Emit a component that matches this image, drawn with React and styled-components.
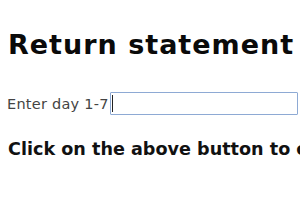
import React from "react";
import styled, { createGlobalStyle } from "styled-components";

const Global = createGlobalStyle`
  html, body { margin: 0; padding: 0; background: #fff; }
  body { font-family: "DejaVu Sans", "Open Sans", sans-serif; overflow: hidden; }
`;

const Page = styled.div`
  width: 300px;
  height: 210px;
  padding: 0 8px;
  box-sizing: border-box;
  white-space: nowrap;
  overflow: hidden;
`;

const Title = styled.h1`
  margin: 0;
  padding-top: 27px;
  font-size: 27px;
  line-height: 36px;
  font-weight: 700;
  letter-spacing: 1px;
  color: #0a0a0a;
`;

const Row = styled.div`
  display: flex;
  align-items: center;
  margin-top: 29px;
  height: 23px;
  margin-left: -1px;
`;

const Label = styled.label`
  font-size: 14.5px;
  letter-spacing: 0.25px;
  color: #444;
`;

const Field = styled.span`
  position: relative;
  flex: none;
  display: block;
  margin-left: 1px;

  &::after {
    content: "";
    position: absolute;
    left: 2px;
    top: 3px;
    width: 1px;
    height: 17px;
    background: #222;
  }
`;

const Input = styled.input`
  display: block;
  width: 188px;
  height: 23px;
  box-sizing: border-box;
  border: 1px solid #8eaad4;
  border-radius: 1px;
  outline: none;
  padding: 0 2px;
  margin: 0;
  font: inherit;
  background: #fff;
`;

const Note = styled.h3`
  margin: 0;
  margin-top: 23px;
  font-size: 17.6px;
  line-height: 22px;
  font-weight: 700;
  color: #111;
`;

export default function App() {
  return (
    <>
      <Global />
      <Page>
        <Title>Return statement</Title>
        <Row>
          <Label htmlFor="day">Enter day 1-7</Label>
          <Field>
            <Input id="day" type="text" />
          </Field>
        </Row>
        <Note>Click on the above button to check the day</Note>
      </Page>
    </>
  );
}
